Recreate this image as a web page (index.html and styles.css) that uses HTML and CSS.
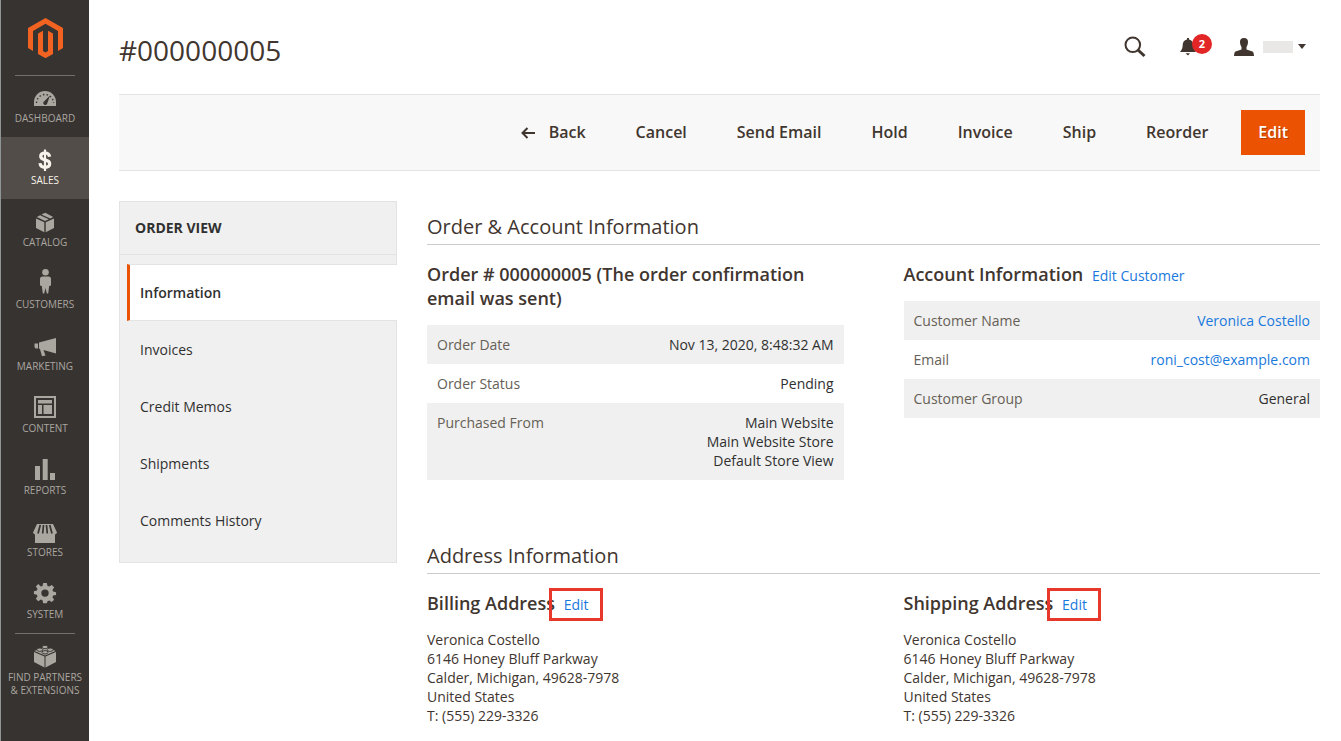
FILE: index.html
```html
<!DOCTYPE html>
<html lang="en">
<head>
<meta charset="utf-8">
<title>#000000005</title>
<link rel="stylesheet" href="styles.css">
</head>
<body>
<div class="app">
  <nav class="menu" aria-label="Main menu">
    <a class="logo" href="#" aria-label="Home">
      <svg width="35" height="40" viewBox="0 0 35 40"><path fill="#f26322" d="M17.500 0 35 10v20l-5 3V13L17.500 5.800 5 13v20l-5-3V10z"/><path fill="#f26322" d="M10 15.500 15 12.800V33l2.500 1.400L20 33V12.800l5 2.700V36l-7.500 4.200L10 36z"/></svg>
    </a>
    <hr class="rule">
    <ul class="menu-list">
      <li><a href="#"><svg class="ico" viewBox="0 -1 24 24"><path fill="currentColor" d="M1 19v-4a11 11 0 0 1 22 0v4z"/><path fill="none" stroke="#373330" stroke-width="1.400" stroke-dasharray="1.500 2.200" d="M3.500 16a8.500 8.500 0 0 1 17 0"/><path fill="#373330" d="M17 8.500 14 17a2 2 0 1 1-3.500-2z"/></svg><span>Dashboard</span></a></li>
      <li class="current"><a href="#"><svg class="ico" viewBox="0 0 24 24"><path fill="none" stroke="currentColor" stroke-width="3.200" d="M16.600 8.700C16.200 6 14.500 5 12 5c-2.700 0-4.300 1.200-4.300 3.300 0 2.400 2 3 4.300 3.600 2.800.7 4.700 1.500 4.700 3.900 0 2.300-1.900 3.500-4.700 3.500s-4.700-1.300-5-4.100"/><path stroke="currentColor" stroke-width="2.200" d="M12 1.500v21.500"/></svg><span>Sales</span></a></li>
      <li><a href="#"><svg class="ico" viewBox="0 0 24 24"><path fill="currentColor" d="m3 8.500 8.300 3.700v10L3 18zM21 8.500l-8.300 3.700v10L21 18zM3.800 7l3.300-1.700 8.700 3.900-3.800 1.700zM8.400 4.600 12.300 2.700 20.200 7l-3 1.500z"/></svg><span>Catalog</span></a></li>
      <li><a href="#"><svg class="ico" viewBox="0 3 24 24"><circle cx="12.500" cy="3.300" r="3.300" fill="currentColor"/><path fill="currentColor" d="M9.500 7.500h6q2.500 0 2.500 2.500v6.500l-1.800.5-1 7.500h-1.400l-1.300-5.500-1.300 5.500H9.800l-1-7.500-1.800-.5V10q0-2.500 2.500-2.500z"/></svg><span>Customers</span></a></li>
      <li><a href="#"><svg class="ico" viewBox="0 0 24 24"><path fill="currentColor" d="M1.500 9.500H5v5H2.500L1.500 13zM6 8.500 23 4v15.500L10.500 16l2 5.500-3.500.7L7 15.200l-1-.7z"/></svg><span>Marketing</span></a></li>
      <li><a href="#"><svg class="ico" viewBox="0 1 24 24"><path fill="none" stroke="currentColor" stroke-width="2" d="M2 2h20v20H2z"/><path fill="currentColor" d="M5 5h14v3.500H5zM5 10h4v9H5zM10.500 10H19v9h-8.500z"/></svg><span>Content</span></a></li>
      <li><a href="#"><svg class="ico" viewBox="0 1 24 24"><path fill="currentColor" d="M2 9h5v14H2zM9.700 2h5v21h-5zM17 16h5v7h-5z"/></svg><span>Reports</span></a></li>
      <li><a href="#"><svg class="ico" viewBox="0 -1 24 24"><path fill="currentColor" d="M4 3h16l4 8.500a3 3 0 0 1-2 2V22H2v-8.500a3 3 0 0 1-2-2z"/><path fill="none" stroke="#373330" stroke-width="1.700" d="M7.300 4 5 12.500M10.500 4l-.8 8.500M13.500 4l.8 8.500M16.700 4l2.300 8.500"/></svg><span>Stores</span></a></li>
      <li><a href="#"><svg class="ico" viewBox="-1 0 26 26"><path fill="currentColor" fill-rule="evenodd" d="m10 1h4l.7 3.200 1.800.8 2.800-1.800 2.600 2.600L20.100 8.600l.7 1.700 3.200.7v3l-3.200.7-.7 1.800 1.800 2.700-2.600 2.600-2.800-1.800-1.800.8L14 23h-4l-.7-3.200-1.800-.8-2.800 1.800-2.600-2.600 1.800-2.700-.7-1.800L0 13v-3l3.200-.7.7-1.700-1.800-2.800 2.600-2.600L7.500 5l1.800-.8zM12 8a4 4 0 1 0 0 8 4 4 0 0 0 0-8z"/></svg><span>System</span></a></li>
    </ul>
    <hr class="rule">
    <ul class="menu-list">
      <li><a href="#"><svg class="ico" viewBox="0 1 24 24"><path fill="currentColor" d="m1 8 10.500 4.500v11L1 18zM23 8l-10.500 4.500v11L23 18z"/><path fill="currentColor" d="M1.500 7 12 2.500 22.500 7 12 11.500z"/><g fill="currentColor" stroke="#373330" stroke-width=".9"><ellipse cx="12" cy="3" rx="3" ry="1.700"/><ellipse cx="6.800" cy="5.700" rx="3" ry="1.700"/><ellipse cx="17.200" cy="5.700" rx="3" ry="1.700"/><ellipse cx="12" cy="8.300" rx="3" ry="1.700"/></g></svg><span>Find Partners<br>&amp; Extensions</span></a></li>
    </ul>
  </nav>

  <div class="page">
    <header class="top">
      <h1>#000000005</h1>
      <div class="tools">
        <button class="tool" aria-label="Search"><svg width="22" height="22" viewBox="0 0 22 22" fill="none" stroke="currentColor"><circle cx="8.800" cy="8.800" r="7.300" stroke-width="2"/><path stroke-width="3" d="m14 14 6.500 6"/></svg></button>
        <button class="tool bell" aria-label="Notifications"><svg width="16" height="18" viewBox="0 0 16 18"><path fill="currentColor" d="M7 0h2v1.500c3 .6 4.200 2.600 4.300 5.500.1 3 .7 4.500 2.700 7H0c2-2.500 2.600-4 2.700-7C2.800 4.100 4 2.100 7 1.500zM5.500 15.300h4.500L8 17.500z"/></svg><span class="badge">2</span></button>
        <button class="tool account" aria-label="Account"><svg width="20" height="18" viewBox="0 0 20 18"><path fill="currentColor" d="M10 0c3 0 4.300 1.800 4 4.500-.2 2.500-1 3.500-1.500 4.500v2.500l6 2q1.300.5 1.500 4.500H0q.2-4 1.500-4.500l6-2V9C7 8 6.200 7 6 4.500 5.700 1.800 7 0 10 0z"/></svg><span class="name"></span><svg width="8" height="5" viewBox="0 0 8 5"><path fill="currentColor" d="M0 0h8L4 5z"/></svg></button>
      </div>
    </header>

    <div class="actions">
      <button class="action"><svg width="14" height="12" viewBox="0 0 14 12" fill="none" stroke="currentColor" stroke-width="2"><path d="M14 6H2M6.500 1 1.500 6l5 5"/></svg>Back</button>
      <button class="action">Cancel</button>
      <button class="action">Send Email</button>
      <button class="action">Hold</button>
      <button class="action">Invoice</button>
      <button class="action">Ship</button>
      <button class="action">Reorder</button>
      <button class="action primary">Edit</button>
    </div>

    <div class="columns">
      <aside class="tabs">
        <h2>Order View</h2>
        <ul>
          <li class="active"><a href="#">Information</a></li>
          <li><a href="#">Invoices</a></li>
          <li><a href="#">Credit Memos</a></li>
          <li><a href="#">Shipments</a></li>
          <li><a href="#">Comments History</a></li>
        </ul>
      </aside>

      <main class="content">
        <section class="section">
          <h2>Order &amp; Account Information</h2>
          <div class="pair">
            <div>
              <h3>Order # 000000005 (The order confirmation email was sent)</h3>
              <table>
                <tr><th scope="row">Order Date</th><td>Nov 13, 2020, 8:48:32 AM</td></tr>
                <tr><th scope="row">Order Status</th><td>Pending</td></tr>
                <tr><th scope="row">Purchased From</th><td>Main Website<br>Main Website Store<br>Default Store View</td></tr>
              </table>
            </div>
            <div>
              <h3>Account Information <a href="#">Edit Customer</a></h3>
              <table>
                <tr><th scope="row">Customer Name</th><td><a href="#">Veronica Costello</a></td></tr>
                <tr><th scope="row">Email</th><td><a href="#">roni_cost@example.com</a></td></tr>
                <tr><th scope="row">Customer Group</th><td>General</td></tr>
              </table>
            </div>
          </div>
        </section>

        <section class="section">
          <h2>Address Information</h2>
          <div class="pair">
            <div>
              <h3>Billing Address <a class="marked" href="#">Edit</a></h3>
              <address>Veronica Costello<br>6146 Honey Bluff Parkway<br>Calder, Michigan, 49628-7978<br>United States<br>T: (555) 229-3326</address>
            </div>
            <div>
              <h3>Shipping Address <a class="marked" href="#">Edit</a></h3>
              <address>Veronica Costello<br>6146 Honey Bluff Parkway<br>Calder, Michigan, 49628-7978<br>United States<br>T: (555) 229-3326</address>
            </div>
          </div>
        </section>
      </main>
    </div>
  </div>
</div>
</body>
</html>
```

FILE: styles.css
```css
* {
  box-sizing: border-box;
}

body {
  margin: 0;
  background: #fff;
  color: #41362f;
  font: 14px/19px "Open Sans", "Noto Sans", sans-serif;
}

a {
  color: #1979dc;
  text-decoration: none;
}

ul {
  margin: 0;
  padding: 0;
  list-style: none;
}

h1, h2, h3 {
  margin: 0;
}

button {
  border: 0;
  padding: 0;
  background: none;
  color: inherit;
  font: inherit;
  cursor: pointer;
}

svg {
  display: block;
}

.app {
  display: flex;
  min-height: 100vh;
}

/* Main menu */
.menu {
  flex: 0 0 89px;
  border-left: 1px solid #8f9694;
  background: #373330;
}

.logo {
  display: flex;
  justify-content: center;
  padding: 18px 0 17px;
}

.rule {
  width: 60px;
  height: 1px;
  margin: 0 auto;
  border: 0;
  background: #736f6a;
}

.logo + .rule {
  margin-bottom: -1px;
}

.menu-list a {
  display: flex;
  flex-direction: column;
  align-items: center;
  gap: 2px;
  min-height: 62px;
  padding-top: 11px;
  color: #aaa6a0;
  font-size: 10px;
  line-height: 13px;
  text-align: center;
  text-transform: uppercase;
  white-space: nowrap;
}

.menu-list .current a {
  background: #524d49;
  color: #f7f3eb;
}

.ico {
  width: 24px;
  height: 24px;
  overflow: visible;
}

/* Page header */
.page {
  flex: 1;
  min-width: 0;
  padding: 0 21px 16px 30px;
}

.top {
  display: flex;
  align-items: center;
  justify-content: space-between;
  height: 94px;
  padding: 6px 14px 0 0;
}

h1 {
  font-size: 28px;
  font-weight: 400;
  line-height: 36px;
}

.tools {
  display: flex;
  align-items: center;
  gap: 34px;
  padding-bottom: 7px;
}

.tool {
  display: flex;
  align-items: center;
  position: relative;
}

.bell {
  width: 20px;
}

.badge {
  position: absolute;
  top: -4px;
  left: 12px;
  width: 20px;
  border-radius: 50%;
  background: #e22626;
  color: #fff;
  font-size: 11px;
  font-weight: 700;
  line-height: 20px;
  text-align: center;
}

.name {
  width: 30px;
  height: 12px;
  margin: 0 5px 0 9px;
  background: #e9e8e7;
}

/* Toolbar */
.actions {
  display: flex;
  align-items: center;
  justify-content: flex-end;
  gap: 16px;
  padding: 15px;
  border: solid #e3e3e3;
  border-width: 1px 0;
  background: #f8f8f8;
}

.action {
  display: flex;
  align-items: center;
  gap: 14px;
  height: 45px;
  padding: 0 17px;
  font-size: 16px;
  font-weight: 600;
}

.primary {
  background: #eb5202;
  color: #fff;
  text-shadow: 1px 1px 0 rgba(0, 0, 0, .25);
}

/* Order view tabs */
.columns {
  display: flex;
  align-items: flex-start;
  gap: 30px;
  padding-top: 30px;
}

.tabs {
  flex: 0 0 278px;
  border: 1px solid #e3e3e3;
  background: #f0f0f0;
}

.tabs h2 {
  padding: 16px 15px 17px;
  border-bottom: 1px solid #e3e3e3;
  color: #303030;
  font-size: 14px;
  font-weight: 700;
  text-transform: uppercase;
}

.tabs ul {
  padding: 9px 0 13px 7px;
}

.tabs li a {
  display: block;
  padding: 19px 13px;
  color: #303030;
}

.tabs .active a {
  margin-right: -1px;
  padding: 18px 10px;
  border: solid #e3e3e3;
  border-width: 1px 0;
  border-left: 3px solid #eb5202;
  background: #fff;
  font-weight: 600;
}

/* Order details */
.content {
  flex: 1;
  min-width: 0;
  padding-top: 12px;
}

.section + .section {
  margin-top: 62px;
}

.section h2 {
  margin-bottom: 17px;
  padding-bottom: 3px;
  border-bottom: 1px solid #ccc;
  font-size: 20px;
  font-weight: 400;
  line-height: 28px;
}

.pair {
  display: grid;
  grid-template-columns: 1fr 1fr;
  gap: 60px;
}

.pair h3 {
  margin-bottom: 15px;
  font-size: 18px;
  font-weight: 600;
  line-height: 24px;
}

.pair h3 a {
  display: inline-block;
  position: relative;
  margin-left: 4px;
  font-size: 14px;
  font-weight: 400;
  line-height: 19px;
}

.marked::after {
  content: "";
  position: absolute;
  inset: -7px -14px -7px -15px;
  border: 3px solid #e8382b;
}

table {
  width: 100%;
  border-collapse: collapse;
}

th, td {
  padding: 10px;
  vertical-align: top;
}

th {
  color: #666056;
  font-weight: 400;
  text-align: left;
}

td {
  color: #303030;
  text-align: right;
}

tr:nth-child(odd) {
  background: #f0f0f0;
}

address {
  font-style: normal;
}
```
